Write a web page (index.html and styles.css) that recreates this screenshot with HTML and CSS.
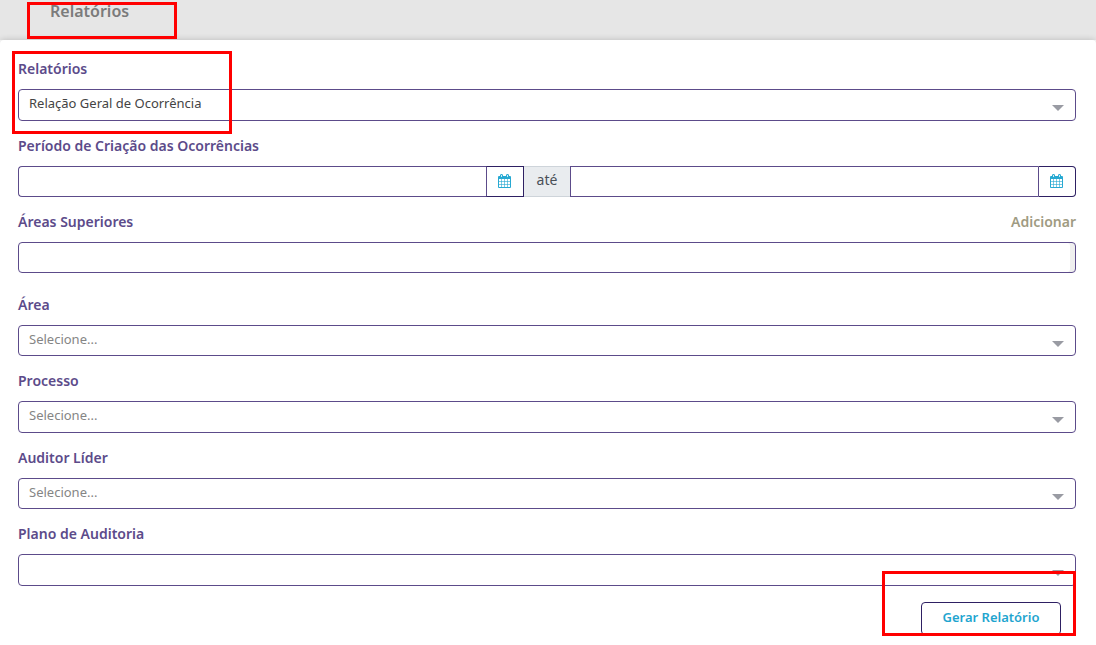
FILE: index.html
```html
<!DOCTYPE html>
<html lang="pt-BR">
<head>
<meta charset="utf-8">
<meta name="viewport" content="width=device-width, initial-scale=1">
<title>Relatórios</title>
<link rel="stylesheet" href="styles.css">
</head>
<body>
<svg class="sprite" aria-hidden="true">
  <symbol id="calendar" viewBox="0 0 13 14">
    <path fill="currentColor" d="M0 5V3q0-1 1-1h1V1.200Q2.200 0 3.500 0T5 1.200V2h3V1.200Q8.200 0 9.500 0T11 1.200V2h1q1 0 1 1v2z"/>
    <path fill="#fff" fill-opacity=".8" d="M3 1h1v2H3zM9 1h1v2H9z"/>
    <path fill="none" stroke="currentColor" d="M.5 4v9.500h12V4"/>
    <path fill="none" stroke="currentColor" stroke-opacity=".6" d="M3.500 5v8M6.500 5v8M9.500 5v8M1 7.500h11M1 10.500h11"/>
  </symbol>
</svg>
<header class="topbar"><h1 class="topbar-title">Relatórios</h1></header>
<main class="panel">
  <form class="form">
    <div class="field">
      <label class="label" for="report">Relatórios</label>
      <div class="select tall"><select id="report" class="control filled"><option>Relação Geral de Ocorrência</option></select></div>
    </div>
    <div class="field">
      <label class="label" for="start">Período de Criação das Ocorrências</label>
      <div class="range">
        <input id="start" class="control date first" type="text">
        <button class="calendar" type="button" aria-label="Abrir calendário inicial"><svg class="icon"><use href="#calendar"/></svg></button>
        <span class="addon">até</span>
        <input class="control date" type="text" aria-label="Data final">
        <button class="calendar last" type="button" aria-label="Abrir calendário final"><svg class="icon"><use href="#calendar"/></svg></button>
      </div>
    </div>
    <div class="field spaced">
      <div class="label-row">
        <label class="label" for="areas">Áreas Superiores</label>
        <a class="add" href="#">Adicionar</a>
      </div>
      <input id="areas" class="control scroll" type="text">
    </div>
    <div class="field">
      <label class="label" for="area">Área</label>
      <div class="select"><select id="area" class="control"><option>Selecione...</option></select></div>
    </div>
    <div class="field">
      <label class="label" for="process">Processo</label>
      <div class="select tall"><select id="process" class="control"><option>Selecione...</option></select></div>
    </div>
    <div class="field">
      <label class="label" for="leader">Auditor Líder</label>
      <div class="select"><select id="leader" class="control"><option>Selecione...</option></select></div>
    </div>
    <div class="field">
      <label class="label" for="plan">Plano de Auditoria</label>
      <div class="select tall"><select id="plan" class="control"><option></option></select></div>
    </div>
    <div class="actions"><button class="submit" type="button">Gerar Relatório</button></div>
  </form>
</main>
<div class="mark mark-title"></div>
<div class="mark mark-report"></div>
<div class="mark mark-submit"></div>
</body>
</html>
```
FILE: styles.css
```css
* { box-sizing: border-box; }

body {
  position: relative;
  margin: 0;
  background: #fff;
  color: #444;
  font-family: "Noto Sans", "Open Sans", sans-serif;
}

.sprite { position: absolute; width: 0; height: 0; }

.topbar {
  height: 40px;
  padding-left: 50px;
  background: #e6e6e6;
}

.topbar-title {
  margin: 0;
  color: #7b7b7b;
  font-size: 16px;
  font-weight: 600;
  line-height: 22px;
}

.panel {
  position: relative;
  padding: 19px 20px 8px 18px;
  border-radius: 4px 4px 0 0;
  background: #fff;
  box-shadow: 0 0 6px rgba(0, 0, 0, .2);
  clip-path: inset(-8px 0 0 0);
}

.field { margin-bottom: 15px; }
.spaced { margin-bottom: 22px; }

.label {
  display: block;
  margin-bottom: 10px;
  color: #5c4b8a;
  font-size: 14px;
  font-weight: 600;
  line-height: 20px;
}

.label-row { display: flex; justify-content: space-between; }

.add {
  color: #9f9b82;
  font-size: 14px;
  font-weight: 600;
  line-height: 20px;
  text-decoration: none;
}

.control {
  display: block;
  width: 100%;
  height: 31px;
  margin: 0;
  padding: 0 32px 3px 10px;
  border: 1px solid #5c4b8a;
  border-radius: 4px;
  outline: 0;
  appearance: none;
  background: #fff;
  color: #858585;
  font-family: inherit;
  font-size: 13px;
}

.filled { color: #444; }
.tall .control { height: 32px; padding-bottom: 4px; }
.scroll { box-shadow: inset -5px 0 #efefef; }
.select { position: relative; }

.select::after {
  content: "";
  position: absolute;
  top: 16px;
  right: 12px;
  border: solid transparent;
  border-width: 6px 6px 0;
  border-top-color: #999ba3;
  pointer-events: none;
}

.range { display: flex; height: 31px; }

.date {
  flex: 1;
  width: 0;
  min-width: 0;
  border-right: 0;
  border-radius: 0;
}

.first { border-radius: 4px 0 0 4px; }

.calendar {
  display: flex;
  align-items: center;
  justify-content: center;
  width: 38px;
  padding: 0 1px 2px 0;
  border: 1px solid #2e2063;
  border-left-color: #5c4b8a;
  background: #fff;
  color: #27a9d2;
}

.last { border-radius: 0 4px 4px 0; }
.icon { width: 13px; height: 14px; }

.addon {
  width: 46px;
  border: solid #ced4da;
  border-width: 1px 0;
  background: #e9ecef;
  color: #495057;
  font-size: 14px;
  line-height: 25px;
  text-align: center;
}

.actions {
  display: flex;
  justify-content: flex-end;
  padding: 1px 15px 0 0;
}

.submit {
  width: 140px;
  height: 33px;
  padding: 0 0 4px;
  border: 1px solid #2e2063;
  border-radius: 4px;
  background: #fff;
  color: #1fa5cf;
  font-family: inherit;
  font-size: 13px;
  font-weight: 600;
}

.mark {
  position: absolute;
  border: 3px solid #f00;
  pointer-events: none;
}

.mark-title { top: 2px; left: 27px; width: 150px; height: 37px; }
.mark-report { top: 51px; left: 12px; width: 220px; height: 83px; }
.mark-submit { top: 571px; right: 20px; width: 194px; height: 65px; }
```
